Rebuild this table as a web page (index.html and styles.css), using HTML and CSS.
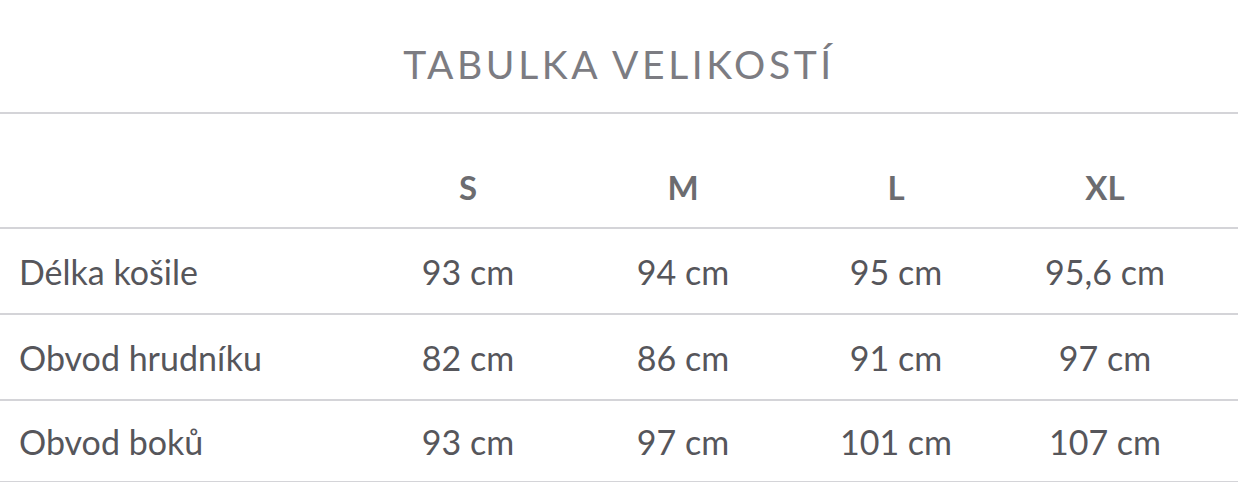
FILE: index.html
```html
<!DOCTYPE html>
<html lang="cs">
<head>
<meta charset="utf-8">
<title>Tabulka velikostí</title>
<link rel="stylesheet" href="styles.css">
</head>
<body>
<div class="page">
  <h1 class="title">TABULKA VELIKOSTÍ</h1>
  <div class="table">
    <div class="row head">
      <div class="label"></div>
      <div class="cell">S</div>
      <div class="cell">M</div>
      <div class="cell">L</div>
      <div class="cell">XL</div>
    </div>
    <div class="row">
      <div class="label">Délka košile</div>
      <div class="cell">93 cm</div>
      <div class="cell">94 cm</div>
      <div class="cell">95 cm</div>
      <div class="cell">95,6 cm</div>
    </div>
    <div class="row">
      <div class="label">Obvod hrudníku</div>
      <div class="cell">82 cm</div>
      <div class="cell">86 cm</div>
      <div class="cell">91 cm</div>
      <div class="cell">97 cm</div>
    </div>
    <div class="row last">
      <div class="label">Obvod boků</div>
      <div class="cell">93 cm</div>
      <div class="cell">97 cm</div>
      <div class="cell">101 cm</div>
      <div class="cell">107 cm</div>
    </div>
  </div>
</div>
</body>
</html>
```

FILE: styles.css
```css
html, body {
  margin: 0;
  padding: 0;
  background: #ffffff;
}

.page {
  width: 1238px;
  font-family: "Lato", "Open Sans", sans-serif;
  color: #56565b;
}

.title {
  margin: 0;
  height: 114px;
  box-sizing: border-box;
  padding-top: 41px;
  text-align: center;
  font-weight: 400;
  font-size: 39px;
  line-height: 46px;
  letter-spacing: 3.6px;
  color: #7c7c82;
  border-bottom: 2px solid #d4d4d8;
}

.table {
  display: flex;
  flex-direction: column;
}

.row {
  display: grid;
  grid-template-columns: 360px 216px 214px 212px 206px;
  align-items: center;
  height: 86px;
  box-sizing: border-box;
  border-bottom: 2px solid #d4d4d8;
  font-size: 34px;
}

.row.last {
  height: 82px;
}

.row.head {
  height: 115px;
  align-items: end;
  padding-bottom: 20px;
  font-weight: 700;
  font-size: 33px;
  color: #6c6c70;
}

.label {
  padding-left: 19px;
}

.cell {
  text-align: center;
}
```
